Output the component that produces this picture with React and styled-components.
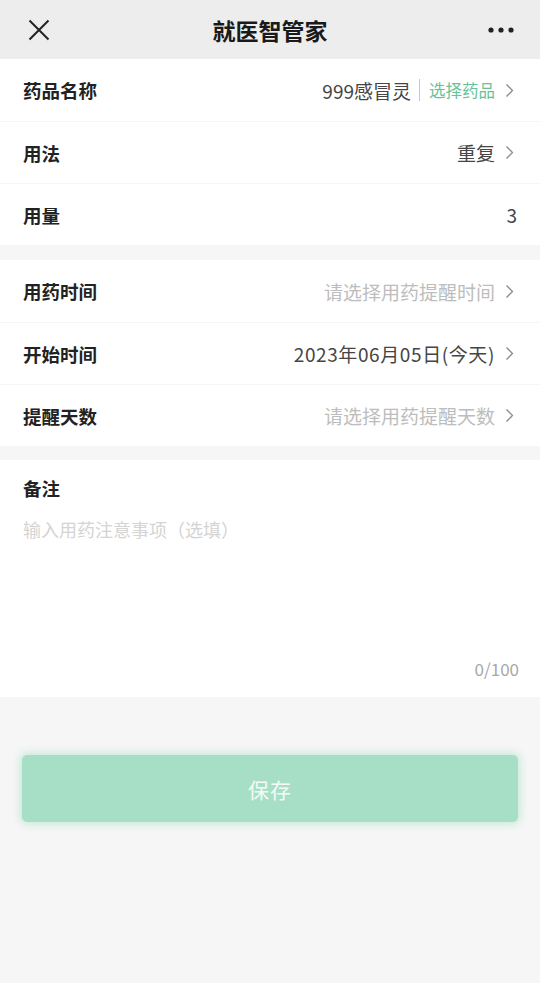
import React from 'react';
import styled, { createGlobalStyle } from 'styled-components';

const GlobalStyle = createGlobalStyle`
  html, body {
    margin: 0;
    padding: 0;
    background: #f6f6f6;
    font-family: "Noto Sans CJK SC", "Noto Sans", sans-serif;
  }
`;

const Page = styled.div`
  width: 540px;
  min-height: 983px;
  background: #f6f6f6;
  display: flex;
  flex-direction: column;
`;

const NavBar = styled.header`
  height: 59px;
  background: #ededed;
  display: grid;
  grid-template-columns: 80px 1fr 80px;
  align-items: center;
`;

const NavTitle = styled.h1`
  margin: 0;
  text-align: center;
  font-size: 23px;
  font-weight: 700;
  color: #1a1a1a;
`;

const NavButton = styled.button`
  border: 0;
  background: none;
  padding: 0;
  height: 40px;
  display: flex;
  align-items: center;
  justify-content: ${p => (p.right ? 'flex-end' : 'flex-start')};
  padding-left: ${p => (p.right ? '0' : '28px')};
  padding-right: ${p => (p.right ? '26px' : '0')};
`;

const Section = styled.section`
  background: #fff;
  margin-bottom: ${p => p.gap || 0}px;
  display: flex;
  flex-direction: column;
`;

const Row = styled.div`
  height: 62px;
  display: flex;
  align-items: center;
  justify-content: space-between;
  padding: 0 23px;
  border-top: ${p => (p.first ? '0' : '1px solid #f6f6f6')};
  box-sizing: border-box;
`;

const Label = styled.span`
  font-size: 18.5px;
  font-weight: 700;
  color: #222;
`;

const Value = styled.div`
  display: flex;
  align-items: center;
  font-size: 19px;
  color: ${p => (p.$muted ? '#bdbdbd' : '#454545')};
  letter-spacing: ${p => (p.$wide ? '0.6px' : '0')};
`;

const Divider = styled.span`
  width: 1px;
  height: 22px;
  background: #c8c8c8;
  margin: 0 9px 0 8px;
`;

const GreenText = styled.span`
  color: #66c29a;
  font-size: 16.5px;
`;

const Arrow = styled.svg`
  margin-left: 10px;
  margin-right: 3px;
  flex-shrink: 0;
`;

const NoteSection = styled(Section)`
  height: 237px;
  padding: 15px 23px 0;
  box-sizing: border-box;
`;

const NoteInput = styled.div`
  margin-top: 15px;
  font-size: 18px;
  color: #d4d4d4;
  flex: 1;
`;

const Counter = styled.div`
  text-align: right;
  font-size: 17px;
  color: #a8a8a8;
  margin-right: -2px;
  margin-bottom: 16px;
`;

const SaveWrap = styled.div`
  padding: 58px 22px 0;
`;

const SaveButton = styled.button`
  width: 100%;
  height: 67px;
  border: 0;
  border-radius: 5px;
  background: #a6dfc6;
  box-shadow: 0 0 8px 2px rgba(166, 223, 198, 0.6);
  color: #f4fbf7;
  font-size: 21px;
  font-family: inherit;
  letter-spacing: 1px;
`;

const Chevron = () => (
  <Arrow width="9" height="15" viewBox="0 0 9 15">
    <path d="M1.5 1.5 L7.5 7.5 L1.5 13.5" fill="none" stroke="#8a8a8a" strokeWidth="1.3" />
  </Arrow>
);

export default function App() {
  return (
    <>
      <GlobalStyle />
      <Page>
        <NavBar>
          <NavButton aria-label="close">
            <svg width="22" height="22" viewBox="0 0 22 22">
              <path d="M1.5 1.5 L20.5 20.5 M20.5 1.5 L1.5 20.5" stroke="#222" strokeWidth="2" />
            </svg>
          </NavButton>
          <NavTitle>就医智管家</NavTitle>
          <NavButton right aria-label="more">
            <svg width="26" height="6" viewBox="0 0 26 6">
              <circle cx="3" cy="3" r="2.6" fill="#222" />
              <circle cx="13" cy="3" r="2.6" fill="#222" />
              <circle cx="23" cy="3" r="2.6" fill="#222" />
            </svg>
          </NavButton>
        </NavBar>

        <Section gap={15}>
          <Row first>
            <Label>药品名称</Label>
            <Value>
              999感冒灵
              <Divider />
              <GreenText>选择药品</GreenText>
              <Chevron />
            </Value>
          </Row>
          <Row>
            <Label>用法</Label>
            <Value>
              重复
              <Chevron />
            </Value>
          </Row>
          <Row>
            <Label>用量</Label>
            <Value>3</Value>
          </Row>
        </Section>

        <Section gap={14}>
          <Row first>
            <Label>用药时间</Label>
            <Value $muted>
              请选择用药提醒时间
              <Chevron />
            </Value>
          </Row>
          <Row>
            <Label>开始时间</Label>
            <Value $wide>
              2023年06月05日(今天)
              <Chevron />
            </Value>
          </Row>
          <Row>
            <Label>提醒天数</Label>
            <Value $muted>
              请选择用药提醒天数
              <Chevron />
            </Value>
          </Row>
        </Section>

        <NoteSection>
          <Label>备注</Label>
          <NoteInput>输入用药注意事项（选填）</NoteInput>
          <Counter>0/100</Counter>
        </NoteSection>

        <SaveWrap>
          <SaveButton>保存</SaveButton>
        </SaveWrap>
      </Page>
    </>
  );
}
